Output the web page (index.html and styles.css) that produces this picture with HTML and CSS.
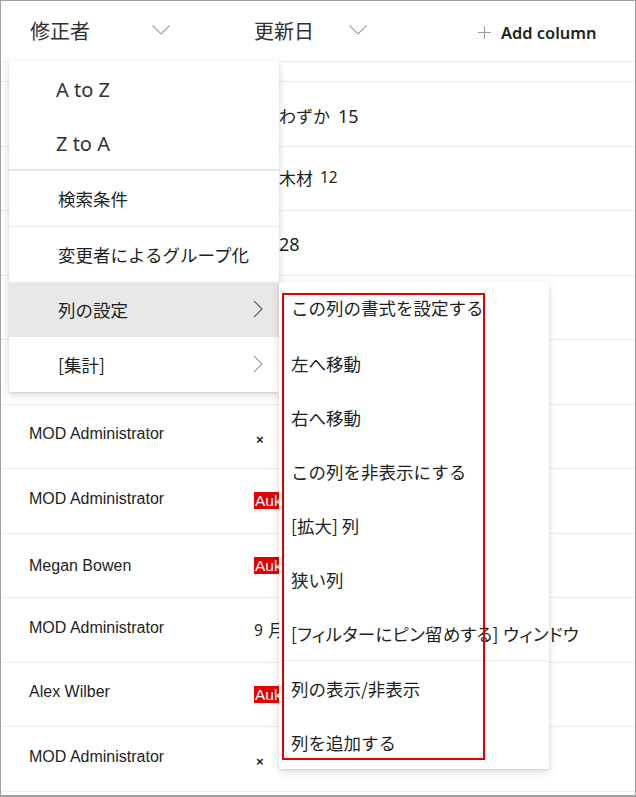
FILE: index.html
```html
<!DOCTYPE html>
<html lang="ja">
<head>
    <meta charset="UTF-8">
    <meta name="viewport" content="width=device-width, initial-scale=1.0">
    <title>列の設定</title>
    <link rel="stylesheet" href="styles.css">
</head>
<body>
    <div class="frame">
        <div class="list-header">
            <div class="col col-name">
                <span class="head-title">修正者</span>
                <svg class="chev-down" width="18" height="10" viewBox="0 0 18 10"><path d="M0.5 0.5 L9 9 L17.5 0.5" fill="none" stroke="#a19f9d" stroke-width="1.1"/></svg>
            </div>
            <div class="col col-date">
                <span class="head-title">更新日</span>
                <svg class="chev-down" width="18" height="10" viewBox="0 0 18 10"><path d="M0.5 0.5 L9 9 L17.5 0.5" fill="none" stroke="#a19f9d" stroke-width="1.1"/></svg>
            </div>
            <div class="col col-add">
                <svg width="13" height="13" viewBox="0 0 13 13"><path d="M6.5 0 V13 M0 6.5 H13" stroke="#a19f9d" stroke-width="1.1"/></svg>
                <span class="add-label">Add column</span>
            </div>
        </div>
        <div class="spacer-row"></div>

        <div class="rows">
            <div class="row"><div class="col col-name"></div><div class="col col-date first"><span class="jp">わずか</span><span class="num wide">15</span></div></div>
            <div class="row"><div class="col col-name"></div><div class="col col-date shifted"><span class="jp">木材</span><span class="num small wide-s">12</span></div></div>
            <div class="row"><div class="col col-name"></div><div class="col col-date shifted third"><span class="num">28</span></div></div>
            <div class="row"><div class="col col-name"></div><div class="col col-date"></div></div>
            <div class="row"><div class="col col-name"></div><div class="col col-date"></div></div>
            <div class="row"><div class="col col-name">MOD Administrator</div><div class="col col-date"><span class="cross">×</span></div></div>
            <div class="row"><div class="col col-name">MOD Administrator</div><div class="col col-date"><span class="tag">Auk</span></div></div>
            <div class="row"><div class="col col-name low">Megan Bowen</div><div class="col col-date"><span class="tag">Auk</span></div></div>
            <div class="row"><div class="col col-name">MOD Administrator</div><div class="col col-date"><span class="num small">9</span><span class="jp month">月</span></div></div>
            <div class="row"><div class="col col-name">Alex Wilber</div><div class="col col-date"><span class="tag">Auk</span></div></div>
            <div class="row"><div class="col col-name">MOD Administrator</div><div class="col col-date"><span class="cross">×</span></div></div>
        </div>

        <!-- column header menu -->
        <div class="menu main-menu">
            <div class="menu-item latin">A to Z</div>
            <div class="menu-item latin">Z to A</div>
            <div class="menu-sep thick"></div>
            <div class="menu-item">検索条件</div>
            <div class="menu-sep"></div>
            <div class="menu-item">変更者によるグループ化</div>
            <div class="menu-item active">列の設定
                <svg class="chev-right" width="10" height="18" viewBox="0 0 10 18"><path d="M1 1 L9 9 L1 17" fill="none" stroke="#605e5c" stroke-width="1.2"/></svg>
            </div>
            <div class="menu-item">[集計]
                <svg class="chev-right" width="10" height="18" viewBox="0 0 10 18"><path d="M1 1 L9 9 L1 17" fill="none" stroke="#a19f9d" stroke-width="1.2"/></svg>
            </div>
        </div>

        <!-- column settings submenu -->
        <div class="menu sub-menu">
            <div class="menu-item">この列の書式を設定する</div>
            <div class="menu-item">左へ移動</div>
            <div class="menu-item">右へ移動</div>
            <div class="menu-item">この列を非表示にする</div>
            <div class="menu-item">[拡大] 列</div>
            <div class="menu-item">狭い列</div>
            <div class="menu-item prop">[フィルターにピン留めする] ウィンドウ</div>
            <div class="menu-sep"></div>
            <div class="menu-item">列の表示/非表示</div>
            <div class="menu-item">列を追加する</div>
            <div class="highlight-box"></div>
        </div>
    </div>
</body>
</html>
```

FILE: styles.css
```css
body {
    margin: 0;
    padding: 0;
    background-color: #ffffff;
    font-family: "Liberation Sans", Arial, sans-serif;
    color: #201f1e;
}
.frame {
    position: relative;
    width: 636px;
    height: 797px;
    box-sizing: border-box;
    border: 1px solid #a0a0a0;
    border-bottom-width: 2px;
    overflow: hidden;
}
.list-header {
    display: flex;
    align-items: center;
    height: 60px;
    border-bottom: 1px solid #edebe9;
}
.spacer-row {
    height: 19px;
    border-bottom: 1px solid #edebe9;
}
.col {
    display: flex;
    align-items: center;
}
.col-name {
    width: 224px;
    padding-left: 28px;
}
.col-date {
    width: 225px;
    padding-left: 0;
}
.list-header .col-name {
    padding-left: 29px;
}
.list-header .col-date {
    width: 224px;
}
.head-title {
    font-family: "Noto Sans CJK JP", sans-serif;
    font-size: 20px;
    color: #323130;
    margin-top: -2px;
}
.list-header .col-name .chev-down {
    margin-left: 62px;
    margin-top: -3px;
}
.list-header .col-date .chev-down {
    margin-left: 35px;
    margin-top: -3px;
}
.col-add {
    gap: 10px;
    margin-top: 2px;
}
.add-label {
    font-family: "Noto Sans", sans-serif;
    font-weight: 600;
    font-size: 16.4px;
    color: #201f1e;
}
.rows .row {
    display: flex;
    align-items: center;
    height: 64.5px;
    box-sizing: border-box;
    border-bottom: 1px solid #edebe9;
}
.rows .col-name {
    font-size: 16px;
    margin-top: -4px;
}
.rows .col-name.low {
    margin-top: 2px;
}
.rows .col-date {
    font-size: 17px;
    padding-left: 1px;
}
.rows .col-date.first {
    padding-left: 26px;
    margin-top: 4px;
}
.rows .col-date.shifted {
    padding-left: 26px;
    margin-top: -2px;
}
.rows .col-date.third {
    margin-top: 2px;
}
.jp {
    font-family: "Noto Sans CJK JP", sans-serif;
    font-size: 17px;
}
.num {
    font-family: "Noto Sans", sans-serif;
    font-size: 18px;
}
.num.wide {
    margin-left: 8px;
}
.num.small {
    font-size: 15.5px;
}
.num.wide-s {
    margin-left: 7px;
}
.month {
    margin-left: 5px;
}
.cross {
    font-size: 13px;
    font-weight: bold;
    margin-left: 2px;
    margin-top: 6px;
}
.tag {
    background-color: #e50000;
    color: #ffffff;
    font-size: 15.5px;
    padding: 0 2px 0 1px;
    line-height: 17px;
}
.menu {
    position: absolute;
    width: 270px;
    background-color: #ffffff;
    box-shadow: 0 3px 8px rgba(0, 0, 0, 0.14), 0 1px 2px rgba(0, 0, 0, 0.1);
    border-radius: 2px;
    font-family: "Noto Sans CJK JP", sans-serif;
    font-size: 17.5px;
    color: #201f1e;
}
.main-menu {
    left: 8px;
    top: 60px;
}
.sub-menu {
    left: 278px;
    top: 281px;
}
.menu-item {
    position: relative;
    display: flex;
    align-items: center;
    height: 54px;
    white-space: nowrap;
}
.main-menu .menu-item {
    padding-left: 49px;
    height: 55px;
}
.main-menu .menu-item.latin {
    font-family: "Noto Sans", sans-serif;
    font-size: 20px;
    color: #323130;
    padding-left: 47px;
    height: 54px;
    padding-top: 3px;
    box-sizing: border-box;
}
.menu-item.active {
    background-color: #e8e8e8;
}
.chev-right {
    position: absolute;
    right: 16px;
    top: 18px;
}
.sub-menu .menu-item {
    padding-left: 12px;
}
.sub-menu .menu-item:first-child {
    height: 51px;
    padding-top: 0;
    margin-bottom: 3px;
}
.sub-menu .menu-item.prop {
    font-feature-settings: "palt";
    letter-spacing: 0.3px;
}
.menu-sep {
    height: 1px;
    background-color: #edebe9;
}
.menu-sep.thick {
    height: 2px;
    background-color: #e6e6e6;
}
.highlight-box {
    position: absolute;
    left: 3px;
    top: 11px;
    width: 203px;
    height: 467px;
    box-sizing: border-box;
    border: 2px solid #e00000;
}
```
